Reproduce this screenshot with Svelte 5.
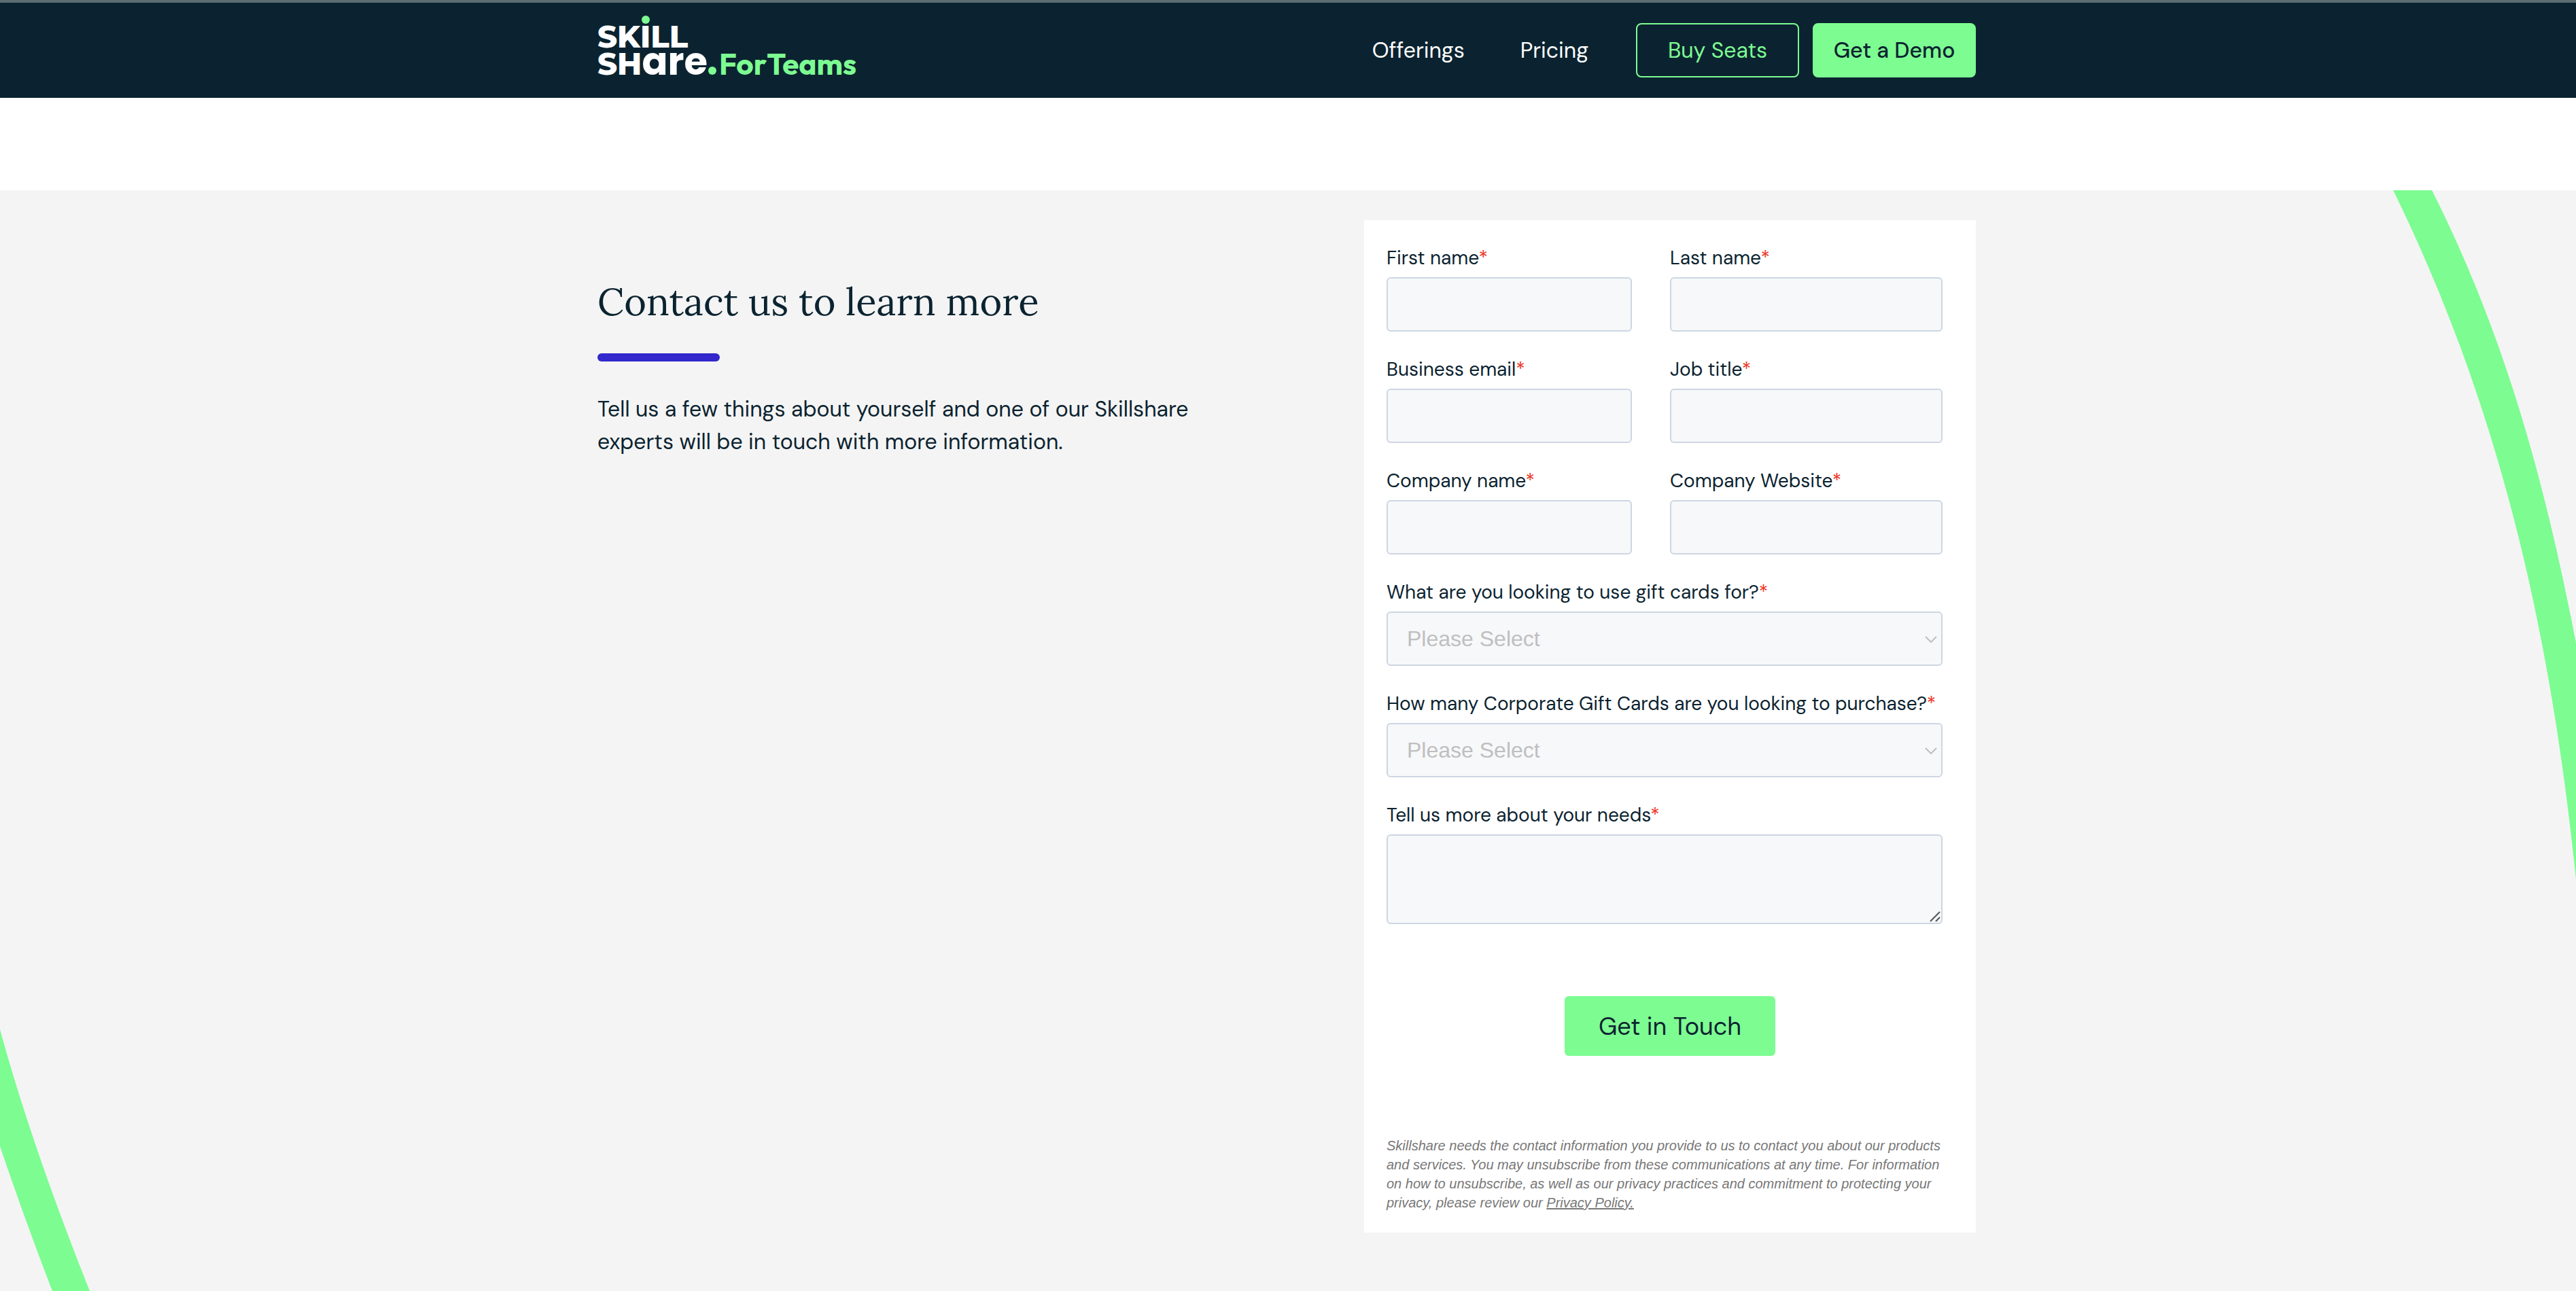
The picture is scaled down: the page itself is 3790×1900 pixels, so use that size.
<script>
  const navLinks = ['Offerings', 'Pricing'];
  const fields = [
    { id: 'first-name', label: 'First name', type: 'text' },
    { id: 'last-name', label: 'Last name', type: 'text' },
    { id: 'email', label: 'Business email', type: 'email' },
    { id: 'job-title', label: 'Job title', type: 'text' },
    { id: 'company', label: 'Company name', type: 'text' },
    { id: 'website', label: 'Company Website', type: 'text' }
  ];
  const selects = [
    { id: 'purpose', label: 'What are you looking to use gift cards for?' },
    { id: 'amount', label: 'How many Corporate Gift Cards are you looking to purchase?' }
  ];
</script>

<div class="page">
  <header class="topbar">
    <div class="container bar">
      <a class="logo" href="#home" aria-label="Skillshare For Teams">
        <svg width="390" height="108" viewBox="0 0 390 108">
          <g class="mark">
            <text x="0" y="50" class="caps">SKILL</text>
            <text x="0" y="90"><tspan class="caps">SH</tspan><tspan class="lower">are</tspan></text>
          </g>
          <circle class="dot" cx="71" cy="9" r="6" />
          <circle class="dot" cx="169" cy="84" r="6" />
          <text x="179" y="90" class="teams">ForTeams</text>
        </svg>
      </a>
      <nav class="nav" aria-label="Main">
        <div class="links">
          {#each navLinks as link}
            <a class="nav-link" href="#{link.toLowerCase()}">{link}</a>
          {/each}
        </div>
        <div class="actions">
          <a class="btn outline" href="#buy">Buy Seats</a>
          <a class="btn solid" href="#demo">Get a Demo</a>
        </div>
      </nav>
    </div>
  </header>

  <main class="contact">
    <svg class="curve right" width="280" height="1014" viewBox="0 0 280 1014" aria-hidden="true">
      <path d="M68 0C180 222 237 444 280 666V1014C245 676 177 338 11 0Z" />
    </svg>
    <svg class="curve left" width="140" height="400" viewBox="0 0 140 400" aria-hidden="true">
      <path d="M0 15Q46 184 132 400H77Q34 288 0 187Z" />
    </svg>

    <div class="container columns">
      <section class="intro">
        <h1>Contact us to learn more</h1>
        <hr />
        <p>
          Tell us a few things about yourself and one of our Skillshare experts will be in touch with
          more information.
        </p>
      </section>

      <form class="card" onsubmit={(e) => e.preventDefault()}>
        <div class="grid">
          {#each fields as f}
            <div class="field">
              <label for={f.id}>{f.label}<span class="req">*</span></label>
              <input id={f.id} type={f.type} />
            </div>
          {/each}
          {#each selects as s}
            <div class="field wide">
              <label for={s.id}>{s.label}<span class="req">*</span></label>
              <div class="control">
                <select id={s.id}>
                  <option>Please Select</option>
                </select>
                <svg class="chevron" width="18" height="10" viewBox="0 0 18 10" aria-hidden="true">
                  <path d="M1 1L9 9L17 1" />
                </svg>
              </div>
            </div>
          {/each}
          <div class="field wide">
            <label for="needs">Tell us more about your needs<span class="req">*</span></label>
            <div class="control">
              <textarea id="needs"></textarea>
              <svg class="grip" width="16" height="16" viewBox="0 0 16 16" aria-hidden="true">
                <path d="M1 15L15 1M9 15L15 9" />
              </svg>
            </div>
          </div>
        </div>

        <button type="submit">Get in Touch</button>

        <p class="legal">
          Skillshare needs the contact information you provide to us to contact you about our products
          and services. You may unsubscribe from these communications at any time. For information on
          how to unsubscribe, as well as our privacy practices and commitment to protecting your
          privacy, please review our <a href="#privacy">Privacy Policy.</a>
        </p>
      </form>
    </div>
  </main>
</div>

<style>
  :global(body) {
    background: #fff;
  }

  .page {
    --green: #7dfc92;
    --navy: #0b2330;
    --border: #cdd6e2;
    min-height: 100vh;
    display: flex;
    flex-direction: column;
    color: var(--navy);
    font-family: 'DM Sans', Inter, 'Liberation Sans', sans-serif;
  }

  .page :where(*) {
    box-sizing: border-box;
  }

  .container {
    width: 100%;
    max-width: 2032px;
    margin: 0 auto;
    padding-right: 4px;
  }

  .topbar {
    background: var(--navy);
    border-top: 4px solid #5c6e74;
    margin-bottom: 136px;
  }

  .bar {
    display: flex;
    align-items: center;
    justify-content: space-between;
    height: 140px;
  }

  .logo svg {
    display: block;
  }

  .mark {
    fill: #fff;
    font-weight: 800;
  }

  .caps {
    font-family: Montserrat, Inter, sans-serif;
    font-size: 45px;
  }

  .lower {
    font-family: Poppins, Inter, sans-serif;
    font-size: 56px;
    font-weight: 700;
  }

  .teams {
    fill: var(--green);
    font-family: Outfit, Inter, sans-serif;
    font-size: 44px;
    font-weight: 700;
  }

  .dot {
    fill: var(--green);
  }

  .nav {
    display: flex;
    align-items: center;
    gap: 70px;
  }

  .links {
    display: flex;
    gap: 82px;
  }

  .nav-link {
    color: #fff;
    font-size: 32px;
    text-decoration: none;
  }

  .actions {
    display: flex;
    gap: 20px;
  }

  .btn {
    display: flex;
    align-items: center;
    justify-content: center;
    width: 240px;
    height: 80px;
    border: 2px solid var(--green);
    border-radius: 8px;
    font-size: 32px;
    text-decoration: none;
  }

  .outline {
    color: var(--green);
  }

  .solid {
    background: var(--green);
    color: var(--navy);
    font-weight: 500;
  }

  .contact {
    position: relative;
    flex: 1;
    overflow: hidden;
    background: #f4f4f4;
    padding: 44px 0 86px;
  }

  .curve {
    position: absolute;
    fill: var(--green);
  }

  .right {
    top: 0;
    right: 0;
  }

  .left {
    bottom: 0;
    left: 0;
  }

  .columns {
    position: relative;
    display: flex;
    justify-content: space-between;
    align-items: flex-start;
  }

  .intro {
    width: 900px;
    padding-top: 84px;
  }

  h1 {
    margin: 0;
    font-family: Lora, 'Noto Serif', serif;
    font-size: 56px;
    font-weight: 400;
    line-height: 72px;
  }

  hr {
    width: 180px;
    height: 12px;
    margin: 40px 0 46px;
    border: 0;
    border-radius: 6px;
    background: #3228cb;
  }

  .intro p {
    margin: 0;
    font-size: 32px;
    line-height: 48px;
  }

  .card {
    width: 900px;
    padding: 36px 33px 30px;
    background: #fff;
  }

  .grid,
  .legal {
    margin: 0 16px 0 0;
  }

  .grid {
    display: grid;
    grid-template-columns: 361fr 401fr;
    gap: 36px 56px;
  }

  .wide {
    grid-column: 1 / -1;
  }

  label {
    display: block;
    margin-bottom: 8px;
    font-size: 28px;
    line-height: 40px;
  }

  .req {
    color: #ee3124;
  }

  input,
  select,
  textarea {
    display: block;
    width: 100%;
    height: 80px;
    margin: 0;
    padding: 0 28px;
    border: 2px solid var(--border);
    border-radius: 6px;
    background: #f7f8fa;
    color: #bfbfbf;
    font-family: 'Liberation Sans', sans-serif;
    font-size: 32px;
    appearance: none;
  }

  textarea {
    height: 132px;
    resize: none;
  }

  .control {
    position: relative;
  }

  .chevron,
  .grip {
    position: absolute;
    fill: none;
    pointer-events: none;
  }

  .chevron {
    top: 36px;
    right: 8px;
    stroke: #bfbfbf;
    stroke-width: 2;
  }

  .grip {
    right: 3px;
    bottom: 3px;
    stroke: #555;
    stroke-width: 2;
  }

  button {
    display: block;
    width: 310px;
    height: 88px;
    margin: 106px auto 118px;
    border: 0;
    border-radius: 6px;
    background: var(--green);
    color: var(--navy);
    font-family: inherit;
    font-size: 36px;
  }

  .legal {
    color: #777;
    font-family: 'Liberation Sans', sans-serif;
    font-size: 20px;
    font-style: italic;
    line-height: 28px;
  }

  .legal a {
    color: inherit;
  }
</style>
